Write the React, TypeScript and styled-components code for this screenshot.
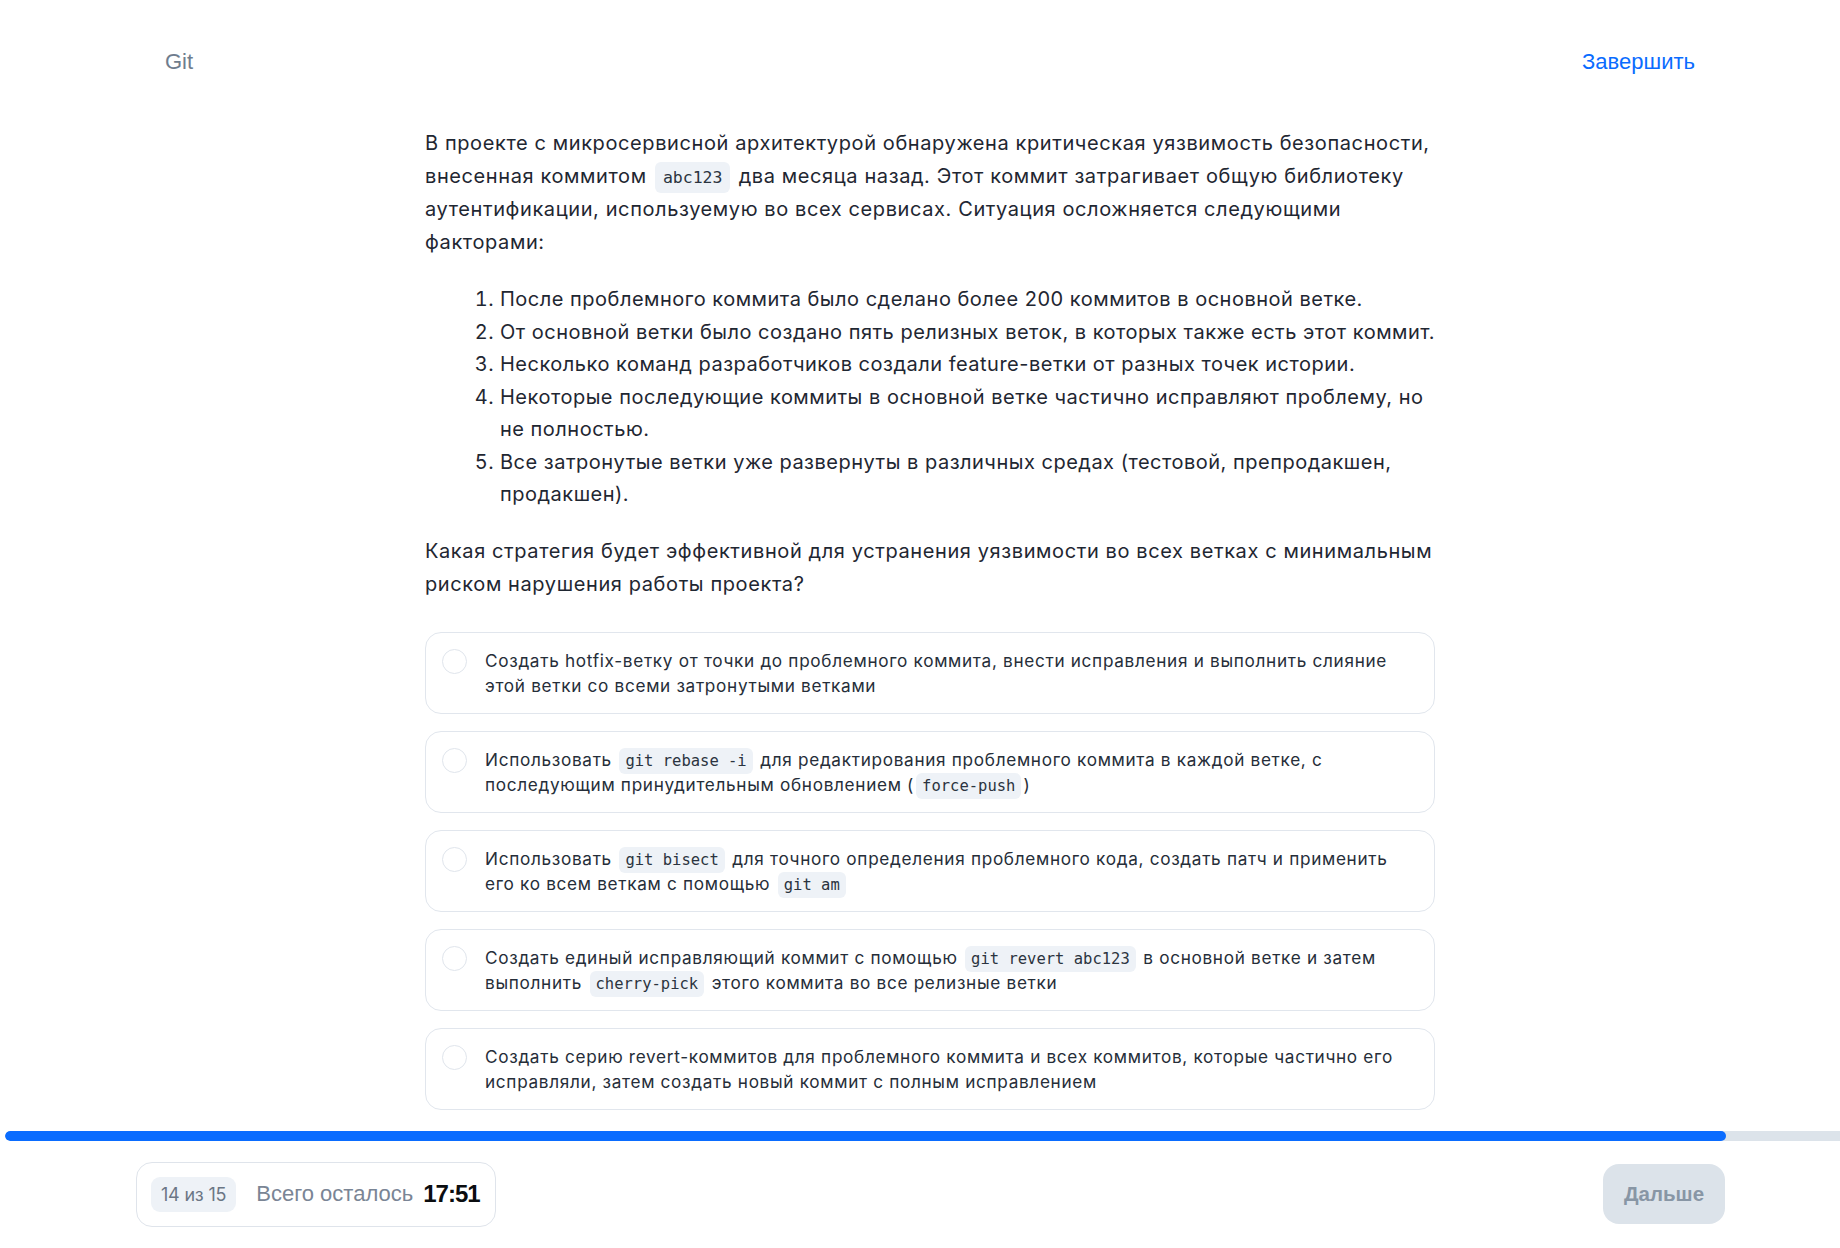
import React from 'react'
import styled, { createGlobalStyle } from 'styled-components'

const GlobalStyle = createGlobalStyle`
  html, body {
    margin: 0;
    padding: 0;
    background: #fff;
    overflow: hidden;
  }
  body {
    font-family: Inter, "Noto Sans", sans-serif;
    color: #1e2630;
  }
`

const Page = styled.div`
  width: 100vw;
  height: 100vh;
  display: flex;
  flex-direction: column;
`

const Header = styled.header`
  display: flex;
  justify-content: space-between;
  align-items: center;
  padding: 49px 145px 0 165px;
  height: 26px;
  font-family: "Liberation Sans", Arial, sans-serif;
  font-size: 22px;
  line-height: 26px;
`

const Topic = styled.span`
  color: #6f7d8e;
`

const FinishLink = styled.a`
  color: #0a6cff;
  text-decoration: none;
  cursor: pointer;
`

const Main = styled.main`
  width: 1010px;
  margin: 52px 0 0 calc(50% - 495px);
  font-size: 20px;
  letter-spacing: 0.6px;
  line-height: 33px;
  color: #1f2732;
`

const Paragraph = styled.p`
  margin: 0 -15px 0 0;
`

const Facts = styled.ol`
  margin: 24px -15px 0 0;
  padding-left: 75px;
  line-height: 32.5px;
  letter-spacing: 0.5px;
`

const Question = styled.p`
  margin: 24px -15px 0 0;
`

const Code = styled.code<{ $small?: boolean }>`
  font-family: "DejaVu Sans Mono", "Liberation Mono", monospace;
  font-size: ${(p) => (p.$small ? '15.5px' : '16.5px')};
  letter-spacing: 0;
  line-height: 1;
  background: #eef2f7;
  border-radius: 6px;
  padding: ${(p) => (p.$small ? '4px 6px' : '6px 8px')};
  margin: 0 2px;
  color: #2b3440;
`

const Options = styled.div`
  display: flex;
  flex-direction: column;
  gap: 17px;
  margin-top: 31px;
`

const Option = styled.label`
  display: flex;
  align-items: flex-start;
  gap: 18px;
  padding: 15px 32px 15px 16px;
  border: 1px solid #e1e6ed;
  border-radius: 16px;
  font-size: 17.2px;
  letter-spacing: 0.68px;
  line-height: 25px;
  color: #262e39;
  cursor: pointer;
`

const Radio = styled.span`
  flex: 0 0 auto;
  box-sizing: border-box;
  width: 25px;
  height: 25px;
  margin-top: 1px;
  border: 1.5px solid #e0e5ec;
  border-radius: 50%;
`

const OptionText = styled.span`
  flex: 1;
`

const Progress = styled.div`
  margin: 21px 0 0 5px;
  height: 10px;
  background: #dce3ea;
  border-radius: 5px 0 0 5px;
  overflow: hidden;
`

const ProgressFill = styled.div`
  height: 100%;
  background: #0a6cff;
  border-radius: 5px;
`

const Footer = styled.footer`
  display: flex;
  justify-content: space-between;
  align-items: center;
  padding: 21px 115px 0 136px;
`

const TimerBox = styled.div`
  display: flex;
  align-items: center;
  height: 63px;
  padding: 0 15px 0 14px;
  border: 1px solid #dfe4eb;
  border-radius: 16px;
  font-family: "Liberation Sans", Arial, sans-serif;
`

const Counter = styled.span`
  display: flex;
  align-items: center;
  height: 35px;
  padding: 0 10px;
  background: #eef2f7;
  border-radius: 9px;
  font-family: Inter, sans-serif;
  font-size: 18px;
  letter-spacing: -0.2px;
  color: #6b7685;
`

const TimerLabel = styled.span`
  margin-left: 20px;
  font-size: 22px;
  color: #7a8595;
`

const TimerValue = styled.span`
  margin-left: 10px;
  font-size: 24px;
  font-weight: 700;
  color: #0b0d10;
  letter-spacing: -1px;
`

const NextButton = styled.button`
  width: 122px;
  height: 60px;
  border: 0;
  border-radius: 16px;
  background: #dce3ea;
  color: #8896a5;
  font-family: "Liberation Sans", Arial, sans-serif;
  font-size: 20.5px;
  font-weight: 700;
`

const facts = [
  'После проблемного коммита было сделано более 200 коммитов в основной ветке.',
  'От основной ветки было создано пять релизных веток, в которых также есть этот коммит.',
  'Несколько команд разработчиков создали feature-ветки от разных точек истории.',
  'Некоторые последующие коммиты в основной ветке частично исправляют проблему, но не полностью.',
  'Все затронутые ветки уже развернуты в различных средах (тестовой, препродакшен, продакшен).',
]

const options: React.ReactNode[] = [
  <>Создать hotfix-ветку от точки до проблемного коммита, внести исправления и выполнить слияние этой ветки со всеми затронутыми ветками</>,
  <>
    Использовать <Code $small>git rebase -i</Code> для редактирования проблемного коммита в каждой ветке, с последующим принудительным обновлением (<Code $small>force-push</Code>)
  </>,
  <>
    Использовать <Code $small>git bisect</Code> для точного определения проблемного кода, создать патч и применить его ко всем веткам с помощью <Code $small>git am</Code>
  </>,
  <>
    Создать единый исправляющий коммит с помощью <Code $small>git revert abc123</Code> в основной ветке и затем выполнить <Code $small>cherry-pick</Code> этого коммита во все релизные ветки
  </>,
  <>Создать серию revert-коммитов для проблемного коммита и всех коммитов, которые частично его исправляли, затем создать новый коммит с полным исправлением</>,
]

export default function App() {
  const current = 14
  const total = 15
  return (
    <Page>
      <GlobalStyle />
      <Header>
        <Topic>Git</Topic>
        <FinishLink>Завершить</FinishLink>
      </Header>
      <Main>
        <Paragraph>
          В проекте с микросервисной архитектурой обнаружена критическая уязвимость безопасности, внесенная коммитом <Code>abc123</Code> два месяца назад. Этот коммит затрагивает общую библиотеку аутентификации, используемую во всех сервисах. Ситуация осложняется следующими факторами:
        </Paragraph>
        <Facts>
          {facts.map((f) => (
            <li key={f}>{f}</li>
          ))}
        </Facts>
        <Question>
          Какая стратегия будет эффективной для устранения уязвимости во всех ветках с минимальным риском нарушения работы проекта?
        </Question>
        <Options>
          {options.map((o, i) => (
            <Option key={i}>
              <Radio />
              <OptionText>{o}</OptionText>
            </Option>
          ))}
        </Options>
      </Main>
      <Progress>
        <ProgressFill style={{ width: `${((current / total) * 100 + 0.45).toFixed(2)}%` }} />
      </Progress>
      <Footer>
        <TimerBox>
          <Counter>
            {current} из {total}
          </Counter>
          <TimerLabel>Всего осталось</TimerLabel>
          <TimerValue>17:51</TimerValue>
        </TimerBox>
        <NextButton>Дальше</NextButton>
      </Footer>
    </Page>
  )
}
